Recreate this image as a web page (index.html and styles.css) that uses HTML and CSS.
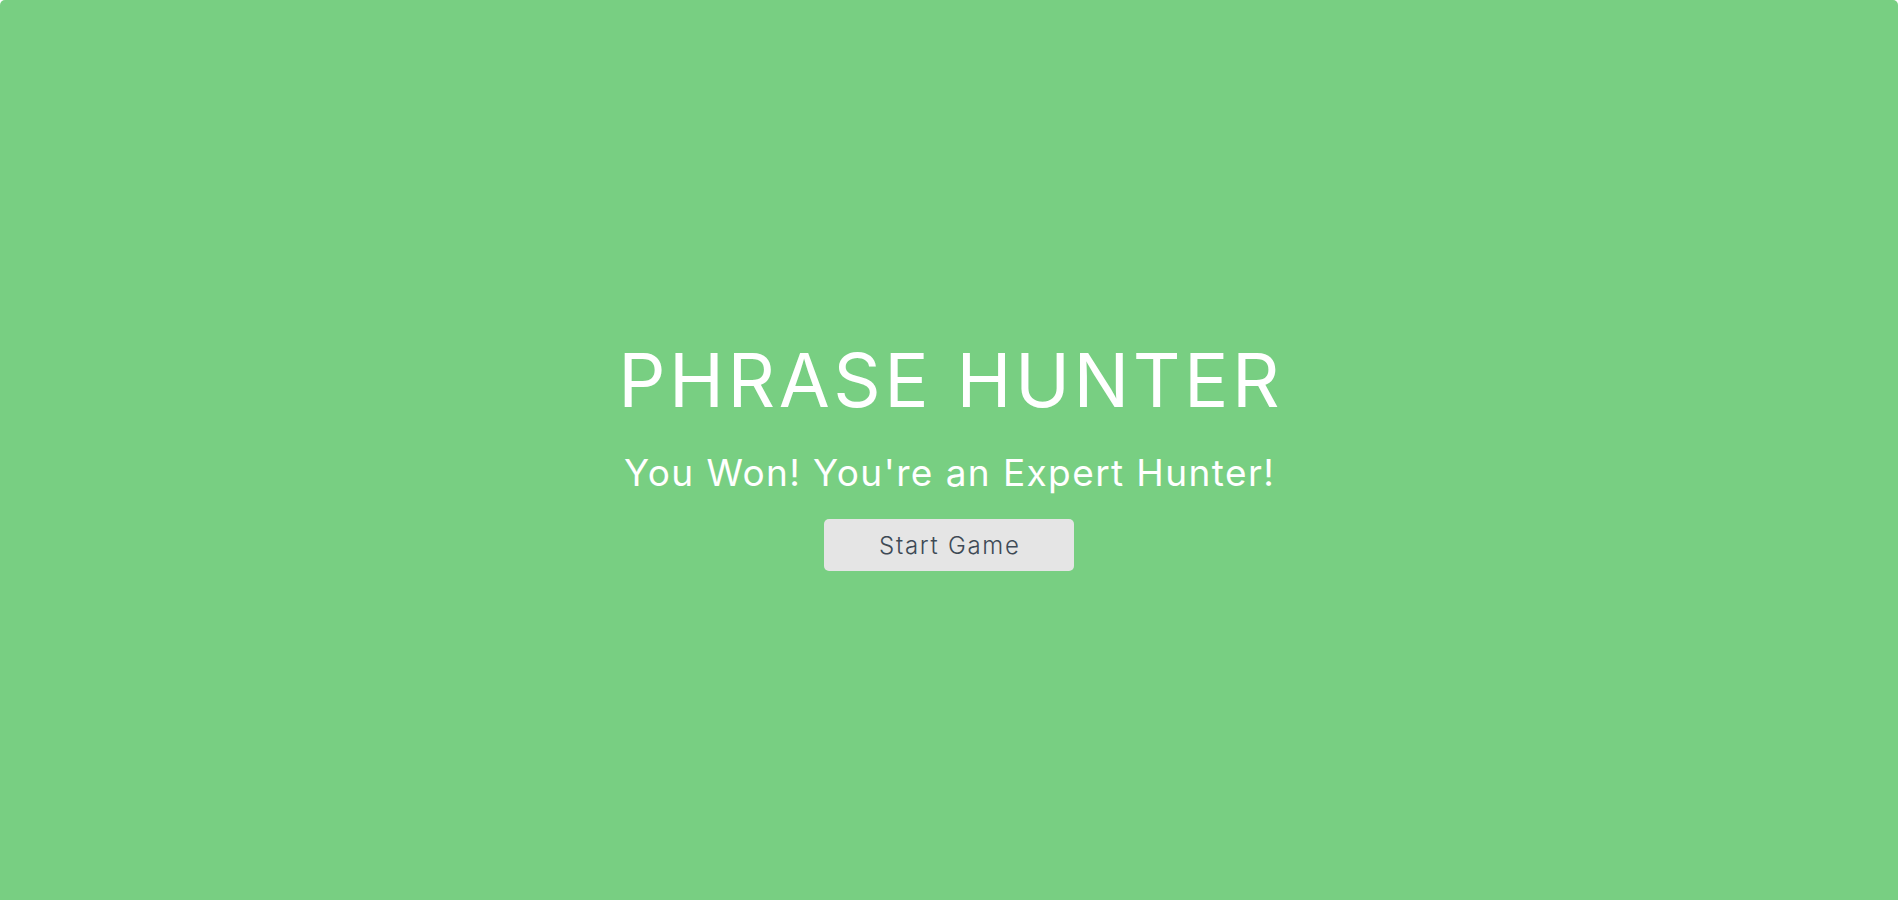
FILE: index.html
```html
<!DOCTYPE html>
<html>
<head>
<meta charset="utf-8">
<link rel="stylesheet" href="styles.css">
<title>Phrase Hunter</title>
</head>
<body>
<div class="overlay win">
  <h2 class="title">PHRASE HUNTER</h2>
  <h1 class="game-over-message">You Won! You're an Expert Hunter!</h1>
  <button class="btn-reset">Start Game</button>
</div>
</body>
</html>
```
FILE: styles.css
```css
html, body {
  margin: 0;
  padding: 0;
  background: #ffffff;
  overflow: hidden;
}
.overlay {
  width: 1898px;
  height: 920px;
  background: #78cf82;
  border-radius: 5px;
  display: flex;
  flex-direction: column;
  align-items: center;
  padding-top: 335px;
  box-sizing: border-box;
  font-family: Inter, "Open Sans", sans-serif;
  color: #ffffff;
}
.title {
  margin: 0;
  font-size: 74px;
  font-weight: 400;
  line-height: 90px;
  letter-spacing: 3.5px;
  padding-left: 3.5px;
}
.game-over-message {
  margin: 26px 0 0 0;
  font-size: 37px;
  font-weight: 400;
  line-height: 44px;
  letter-spacing: 1.4px;
  padding-left: 1.4px;
}
.btn-reset {
  margin-top: 24px;
  width: 250px;
  height: 52px;
  border: none;
  border-radius: 5px;
  background: #e5e5e5;
  color: #3e4a55;
  font-family: Inter, "Open Sans", sans-serif;
  font-size: 24px;
  font-weight: 300;
  letter-spacing: 1.7px;
  padding: 0 0 0 1.7px;
}
```
